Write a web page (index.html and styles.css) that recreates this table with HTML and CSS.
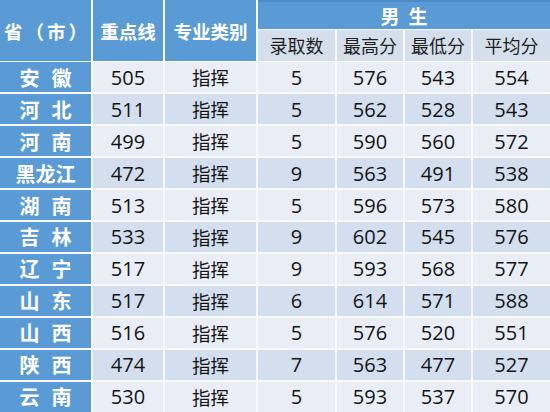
FILE: index.html
```html
<!DOCTYPE html>
<html lang="zh">
<head>
<meta charset="utf-8">
<link rel="stylesheet" href="styles.css">
</head>
<body>
<div class="table">
  <div class="hd main span2 wide">省（市）</div>
  <div class="hd main span2">重点线</div>
  <div class="hd main span2">专业类别</div>
  <div class="hd group">男<span class="gap"></span>生</div>
  <div class="sub">录取数</div>
  <div class="sub">最高分</div>
  <div class="sub">最低分</div>
  <div class="sub">平均分</div>

  <div class="prov">安<span class="pgap"></span>徽</div><div class="c odd">505</div><div class="c odd zh">指挥</div><div class="c odd">5</div><div class="c odd">576</div><div class="c odd">543</div><div class="c odd">554</div>
  <div class="prov">河<span class="pgap"></span>北</div><div class="c even">511</div><div class="c even zh">指挥</div><div class="c even">5</div><div class="c even">562</div><div class="c even">528</div><div class="c even">543</div>
  <div class="prov">河<span class="pgap"></span>南</div><div class="c odd">499</div><div class="c odd zh">指挥</div><div class="c odd">5</div><div class="c odd">590</div><div class="c odd">560</div><div class="c odd">572</div>
  <div class="prov">黑龙江</div><div class="c even">472</div><div class="c even zh">指挥</div><div class="c even">9</div><div class="c even">563</div><div class="c even">491</div><div class="c even">538</div>
  <div class="prov">湖<span class="pgap"></span>南</div><div class="c odd">513</div><div class="c odd zh">指挥</div><div class="c odd">5</div><div class="c odd">596</div><div class="c odd">573</div><div class="c odd">580</div>
  <div class="prov">吉<span class="pgap"></span>林</div><div class="c even">533</div><div class="c even zh">指挥</div><div class="c even">9</div><div class="c even">602</div><div class="c even">545</div><div class="c even">576</div>
  <div class="prov">辽<span class="pgap"></span>宁</div><div class="c odd">517</div><div class="c odd zh">指挥</div><div class="c odd">9</div><div class="c odd">593</div><div class="c odd">568</div><div class="c odd">577</div>
  <div class="prov">山<span class="pgap"></span>东</div><div class="c even">517</div><div class="c even zh">指挥</div><div class="c even">6</div><div class="c even">614</div><div class="c even">571</div><div class="c even">588</div>
  <div class="prov">山<span class="pgap"></span>西</div><div class="c odd">516</div><div class="c odd zh">指挥</div><div class="c odd">5</div><div class="c odd">576</div><div class="c odd">520</div><div class="c odd">551</div>
  <div class="prov">陕<span class="pgap"></span>西</div><div class="c even">474</div><div class="c even zh">指挥</div><div class="c even">7</div><div class="c even">563</div><div class="c even">477</div><div class="c even">527</div>
  <div class="prov">云<span class="pgap"></span>南</div><div class="c odd">530</div><div class="c odd zh">指挥</div><div class="c odd">5</div><div class="c odd">593</div><div class="c odd">537</div><div class="c odd">570</div>
</div>
</body>
</html>
```

FILE: styles.css
```css
html, body {
  margin: 0;
  padding: 0;
  background: #ffffff;
}

.table {
  display: grid;
  width: 550px;
  height: 412px;
  grid-template-columns: 91px 70px 91px 77px 66px 66px 77px;
  grid-template-rows: 28.5px 30.5px repeat(11, 1fr);
  column-gap: 2px;
  row-gap: 1.5px;
  background: #f7f9fc;
  font-family: "Open Sans", "Noto Sans CJK SC", sans-serif;
}

.table > div {
  display: flex;
  align-items: center;
  justify-content: center;
  white-space: nowrap;
}

.hd {
  background: #5b9bd5;
  color: #ffffff;
  font-family: "Noto Sans CJK SC", sans-serif;
  font-weight: 700;
  font-size: 18.5px;
}

.wide {
  letter-spacing: 3px;
  text-indent: 3px;
}

.span2 {
  grid-row: span 2;
}

.main {
  padding-top: 2px;
}

.group {
  grid-column: span 4;
  border-top: 2px solid #4a8bc8;
  box-sizing: border-box;
  font-size: 19px;
}

.gap {
  display: inline-block;
  width: 9px;
}

.sub {
  background: #d5dfec;
  color: #1e1e1e;
  font-family: "Noto Sans CJK SC", sans-serif;
  font-size: 18px;
}

.prov {
  background: #5b9bd5;
  color: #ffffff;
  font-family: "Noto Sans CJK SC", sans-serif;
  font-weight: 700;
  font-size: 20px;
}

.pgap {
  display: inline-block;
  width: 12px;
}

.c {
  color: #141414;
  font-size: 20px;
}

.zh {
  font-family: "Noto Sans CJK SC", sans-serif;
  font-size: 18.5px;
}

.odd {
  background: #e9eef6;
}

.even {
  background: #d3dfee;
}
```
